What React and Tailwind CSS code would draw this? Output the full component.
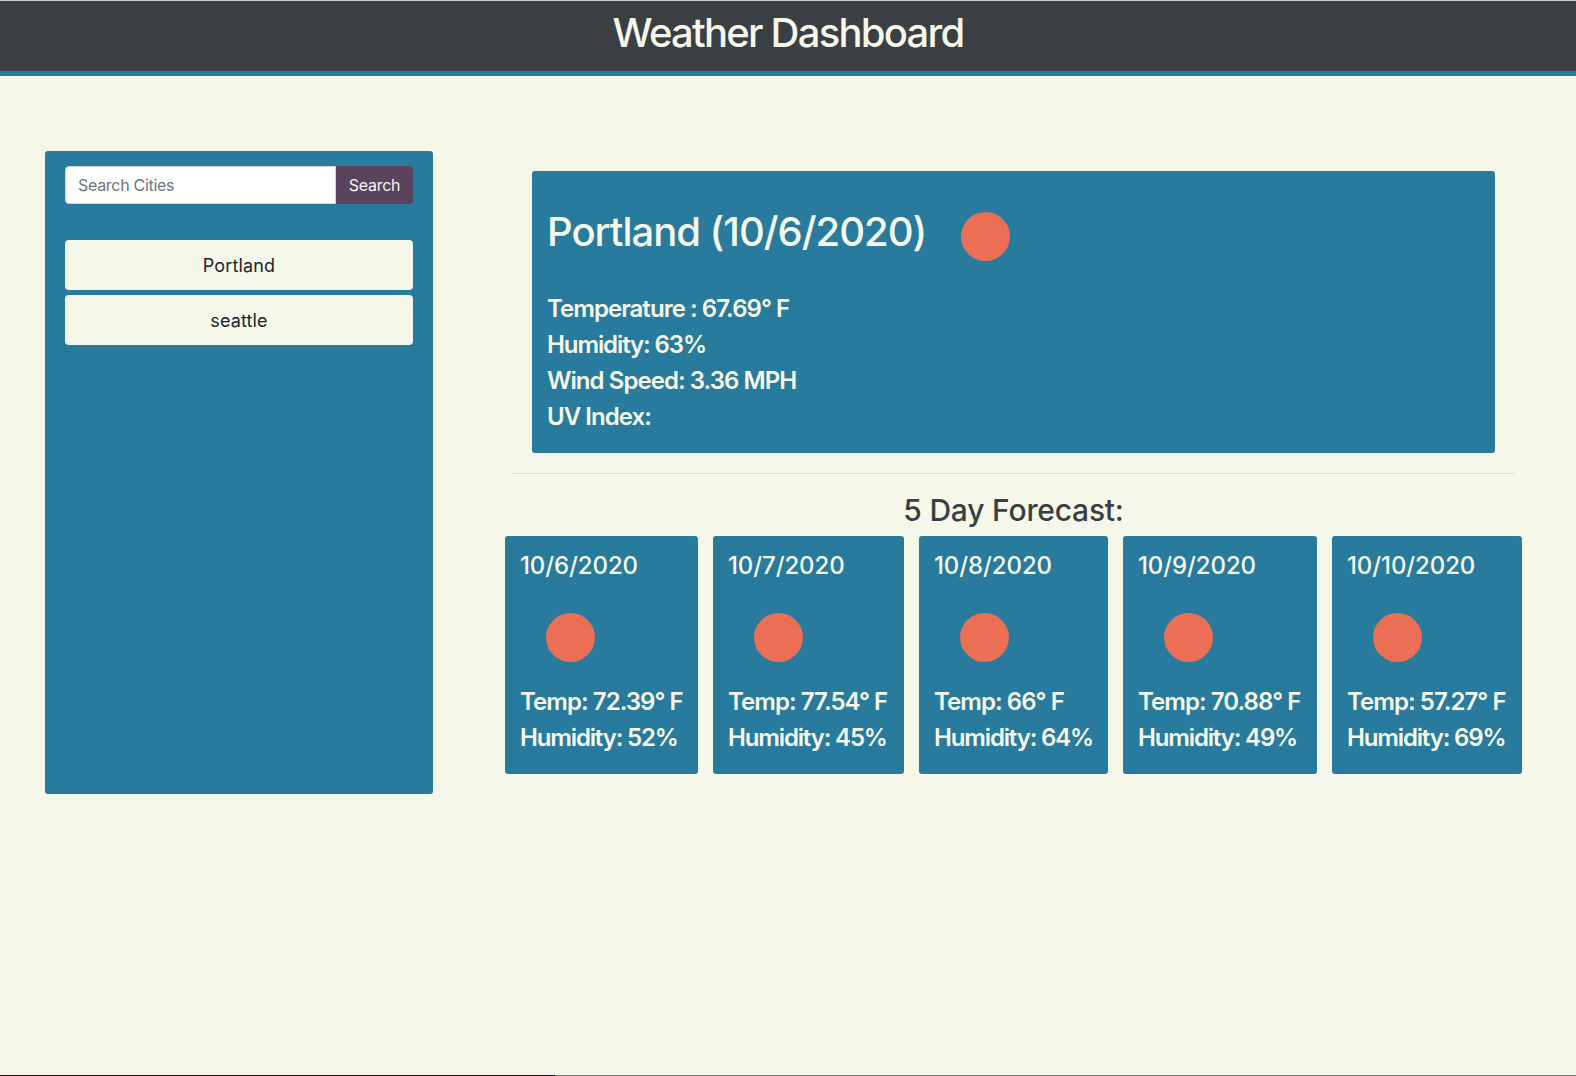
import React from 'react';

const font = 'font-["Inter","Liberation_Sans",sans-serif]';

const forecast = [
  { date: '10/6/2020', temp: '72.39', humidity: '52', width: 'w-[193px]' },
  { date: '10/7/2020', temp: '77.54', humidity: '45', width: 'w-[191px]' },
  { date: '10/8/2020', temp: '66', humidity: '64', width: 'w-[189px]' },
  { date: '10/9/2020', temp: '70.88', humidity: '49', width: 'w-[194px]' },
  { date: '10/10/2020', temp: '57.27', humidity: '69', width: 'w-[190px]' },
];

const ForecastCard = ({ day }) => (
  <div className={`${day.width} h-[238px] shrink-0 rounded-[3px] bg-[#287b9c] px-[15px] pt-[15px] text-[#f5f7ea]`}>
    <h5 className="text-[24px] leading-[29px] font-medium tracking-[-0.1px] whitespace-nowrap">{day.date}</h5>
    <div className="mt-[33px] ml-[26px] h-[49px] w-[49px] rounded-full bg-[#ea6f55]" />
    <p className="mt-[22px] text-[24px] leading-[36px] font-semibold tracking-[-0.95px] whitespace-nowrap">Temp: {day.temp}° F</p>
    <p className="text-[24px] leading-[36px] font-semibold tracking-[-1.15px] whitespace-nowrap">Humidity: {day.humidity}%</p>
  </div>
);

const App = () => {
  return (
    <div className={`${font} flex h-[1076px] flex-col bg-[#f5f7ea]`}>
      {/* Header */}
      <header className="flex h-[76px] shrink-0 items-center justify-center border-t border-b-[5px] border-t-[#d0d0d0] border-b-[#287b9c] bg-[#3a3f43]">
        <h1 className="-mt-[6px] text-[40px] leading-[48px] font-medium tracking-[-1.75px] text-[#f5f7ea]">Weather Dashboard</h1>
      </header>

      <div className="flex pt-[75px] pl-[45px]">
        {/* Sidebar */}
        <aside className="h-[643px] w-[388px] shrink-0 rounded-[3px] bg-[#287b9c] px-[20px] pt-[15px]">
          <div className="flex h-[38px]">
            <input
              placeholder="Search Cities"
              className="h-full min-w-0 flex-1 rounded-l-[4px] border border-[#ced4da] bg-white px-[12px] text-[16px] tracking-[-0.3px] text-[#495057] outline-none placeholder:text-[#6c757d]"
            />
            <button className="h-full w-[77px] rounded-r-[4px] bg-[#5a435c] text-[16px] tracking-[-0.25px] text-[#f5f7ea]">Search</button>
          </div>
          <div className="mt-[36px] flex flex-col gap-[5px]">
            <button className="h-[50px] rounded-[4px] bg-[#f5f7ea] text-[18px] tracking-[0.15px] text-[#212529]">Portland</button>
            <button className="h-[50px] rounded-[4px] bg-[#f5f7ea] text-[18px] tracking-[0.15px] text-[#212529]">seattle</button>
          </div>
        </aside>

        {/* Main */}
        <main className="ml-[72px] flex w-[1017px] shrink-0 flex-col items-center pt-[20px]">
          <section className="h-[282px] w-[963px] rounded-[3px] bg-[#287b9c] px-[15px] pt-[36px] text-[#f5f7ea]">
            <div className="flex items-start">
              <h2 className="w-[378px] text-[40px] leading-[50px] font-medium tracking-[-1px] whitespace-nowrap">Portland (10/6/2020)</h2>
              <div className="mt-[5px] ml-[36px] h-[49px] w-[49px] rounded-full bg-[#ea6f55]" />
            </div>
            <div className="mt-[30px] text-[24px] leading-[36px] font-semibold tracking-[-0.95px]">
              <p>Temperature : 67.69° F</p>
              <p className="tracking-[-1.1px]">Humidity: 63%</p>
              <p>Wind Speed: 3.36 MPH</p>
              <p>UV Index:</p>
            </div>
          </section>
          <hr className="mt-[20px] w-[1003px] border-t border-[#dfe1d6]" />
          <h3 className="mt-[16px] text-center text-[30px] leading-[40px] font-medium tracking-[-0.2px] text-[#3a3f43]">5 Day Forecast:</h3>
          <div className="mt-[6px] flex gap-[15px]">
            {forecast.map((day) => (
              <ForecastCard key={day.date} day={day} />
            ))}
          </div>
        </main>
      </div>

      {/* Bottom edge of the capture */}
      <div className="mt-auto flex h-px shrink-0">
        <div className="w-[555px] bg-[#1e1020]" />
        <div className="flex-1 bg-[#777a72]" />
      </div>
    </div>
  );
};

export default App;
